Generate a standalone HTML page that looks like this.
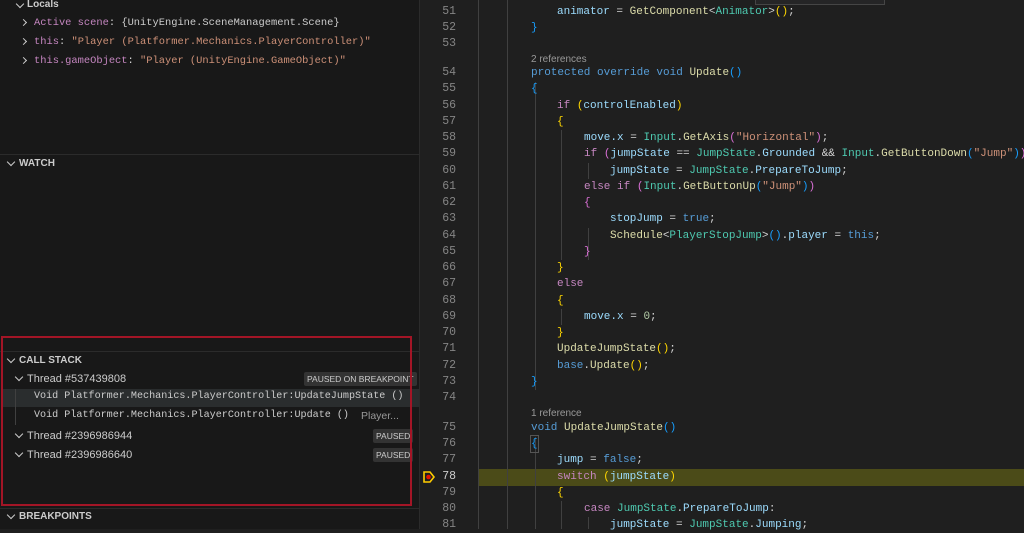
<!DOCTYPE html>
<html><head><meta charset="utf-8"><style>
*{margin:0;padding:0;box-sizing:border-box}
body{width:1024px;height:529px;background:#1f1f1f;overflow:hidden;position:relative;font-family:"Liberation Mono",monospace;font-size:11px;color:#ccc}
.lp{position:absolute;left:0;top:0;width:420px;height:529px;background:#181818;border-right:1px solid #2b2b2b}
.t{position:absolute;white-space:pre;line-height:16px}
.s{font-family:"Liberation Sans",sans-serif}
.h{font-family:"Liberation Sans",sans-serif;font-weight:bold;font-size:10px;color:#ccc}
.sep{position:absolute;left:0;width:419px;height:1px;background:#2b2b2b}
.badge{position:absolute;background:#333;color:#ccc;font-family:"Liberation Sans",sans-serif;font-size:8.5px;line-height:14px;padding:0 3px;border-radius:2px;white-space:nowrap}
.ln{position:absolute;left:420px;width:36px;text-align:right;color:#858585;white-space:pre;line-height:16px;font-size:11.5px}
.c{position:absolute;white-space:pre;line-height:16px;color:#9cdcfe}
.k{color:#569cd6}.p{color:#c586c0}.ty{color:#4ec9b0}.f{color:#dcdcaa}.st{color:#ce9178}.w{color:#d4d4d4}
.y{color:#ffd700}.m{color:#da70d6}.b{color:#179fff}.n{color:#b5cea8}
.g{position:absolute;width:1px;background:#404040}
.ref{position:absolute;font-family:"Liberation Sans",sans-serif;font-size:10px;color:#999;line-height:13px}
.chev{position:absolute;width:6px;height:6px;border-right:1.2px solid #ccc;border-bottom:1.2px solid #ccc;transform:rotate(45deg)}
.chr{position:absolute;width:5px;height:5px;border-right:1.2px solid #ccc;border-bottom:1.2px solid #ccc;transform:rotate(-45deg)}
</style></head><body>
<div class="lp">
<div class="chev" style="left:17px;top:1px"></div>
<div class="t h" style="left:27px;top:-3px">Locals</div>
<div class="chr" style="left:21px;top:20px"></div>
<div class="t" style="left:34px;top:15px;font-size:10.4px"><span style="color:#c586c0">Active scene</span><span class="w">:</span> <span style="color:#ccc">{UnityEngine.SceneManagement.Scene}</span></div>
<div class="chr" style="left:21px;top:39px"></div>
<div class="t" style="left:34px;top:34px;font-size:10.4px"><span style="color:#c586c0">this</span><span class="w">:</span> <span class="st">"Player (Platformer.Mechanics.PlayerController)"</span></div>
<div class="chr" style="left:21px;top:58px"></div>
<div class="t" style="left:34px;top:53px;font-size:10.4px"><span style="color:#c586c0">this.gameObject</span><span class="w">:</span> <span class="st">"Player (UnityEngine.GameObject)"</span></div>
<div class="sep" style="top:154px"></div>
<div class="chev" style="left:8px;top:159px"></div>
<div class="t h" style="left:19px;top:156px">WATCH</div>
<div class="sep" style="top:351px"></div>
<div class="chev" style="left:8px;top:356px"></div>
<div class="t h" style="left:19px;top:353px">CALL STACK</div>
<div class="chev" style="left:16px;top:374px"></div>
<div class="t s" style="left:27px;top:371px;font-size:11px">Thread #537439808</div>
<div class="badge" style="left:304px;top:372px">PAUSED ON BREAKPOINT</div>
<div style="position:absolute;left:3px;top:389px;width:416px;height:18px;background:#2a2d2e"></div>
<div class="g" style="left:15px;top:389px;height:36px"></div>
<div class="t" style="left:34px;top:389px;color:#ccc;font-size:10.1px">Void Platformer.Mechanics.PlayerController:UpdateJumpState ()</div>
<div class="t" style="left:34px;top:408px;color:#ccc;font-size:10.1px">Void Platformer.Mechanics.PlayerController:Update ()</div>
<div class="t s" style="left:361px;top:408px;color:#999;font-size:10.5px">Player...</div>
<div class="chev" style="left:16px;top:431px"></div>
<div class="t s" style="left:27px;top:428px;font-size:11px">Thread #2396986944</div>
<div class="badge" style="left:373px;top:429px">PAUSED</div>
<div class="chev" style="left:16px;top:450px"></div>
<div class="t s" style="left:27px;top:447px;font-size:11px">Thread #2396986640</div>
<div class="badge" style="left:373px;top:448px">PAUSED</div>
<div style="position:absolute;left:1px;top:336px;width:411px;height:170px;border:2px solid #a31526"></div>
<div class="sep" style="top:508px"></div>
<div class="chev" style="left:8px;top:512px"></div>
<div class="t h" style="left:19px;top:509px">BREAKPOINTS</div>
</div>
<div style="position:absolute;left:755px;top:0;width:130px;height:5px;background:#252526;border:1px solid #454545;border-top:none"></div>
<div style="position:absolute;left:478px;top:469px;width:546px;height:17px;background:#4b4b18"></div>
<div class="g" style="left:478px;top:0;height:529px"></div>
<div class="g" style="left:507px;top:0;height:529px"></div>
<div class="g" style="left:535px;top:82px;height:308px"></div>
<div class="g" style="left:535px;top:437px;height:92px"></div>
<div class="g" style="left:561px;top:130px;height:130px"></div>
<div class="g" style="left:561px;top:309px;height:16px"></div>
<div class="g" style="left:561px;top:501px;height:28px"></div>
<div class="g" style="left:588px;top:228px;height:32px"></div>
<div class="g" style="left:588px;top:163px;height:16px"></div>
<div class="g" style="left:588px;top:517px;height:12px"></div>
<svg style="position:absolute;left:422px;top:470px" width="14" height="14" viewBox="0 0 14 14"><path d="M2 2H8L12 7L8 12H2Z" fill="none" stroke="#ffcc00" stroke-width="1.6"/><circle cx="6.5" cy="7" r="2.3" fill="#e51400"/></svg>
<div class="ln" style="top:4px">51</div><div class="c" style="left:557px;top:4px">animator <span class="w">=</span> <span class="f">GetComponent</span><span class="w">&lt;</span><span class="ty">Animator</span><span class="w">&gt;</span><span class="y">()</span><span class="w">;</span></div>
<div class="ln" style="top:20px">52</div><div class="c b" style="left:531px;top:20px">}</div>
<div class="ln" style="top:36px">53</div>
<div class="ref" style="left:531px;top:53px">2 references</div>
<div class="ln" style="top:65px">54</div><div class="c" style="left:531px;top:65px"><span class="k">protected override void</span> <span class="f">Update</span><span class="b">()</span></div>
<div class="ln" style="top:81px">55</div><div class="c b" style="left:531px;top:81px">{</div>
<div class="ln" style="top:98px">56</div><div class="c" style="left:557px;top:98px"><span class="p">if</span> <span class="y">(</span>controlEnabled<span class="y">)</span></div>
<div class="ln" style="top:114px">57</div><div class="c y" style="left:557px;top:114px">{</div>
<div class="ln" style="top:130px">58</div><div class="c" style="left:584px;top:130px">move.x <span class="w">=</span> <span class="ty">Input</span><span class="w">.</span><span class="f">GetAxis</span><span class="m">(</span><span class="st">"Horizontal"</span><span class="m">)</span><span class="w">;</span></div>
<div class="ln" style="top:146px">59</div><div class="c" style="left:584px;top:146px"><span class="p">if</span> <span class="m">(</span>jumpState <span class="w">==</span> <span class="ty">JumpState</span><span class="w">.</span>Grounded <span class="w">&amp;&amp;</span> <span class="ty">Input</span><span class="w">.</span><span class="f">GetButtonDown</span><span class="b">(</span><span class="st">"Jump"</span><span class="b">)</span><span class="m">)</span></div>
<div class="ln" style="top:163px">60</div><div class="c" style="left:610px;top:163px">jumpState <span class="w">=</span> <span class="ty">JumpState</span><span class="w">.</span>PrepareToJump<span class="w">;</span></div>
<div class="ln" style="top:179px">61</div><div class="c" style="left:584px;top:179px"><span class="p">else if</span> <span class="m">(</span><span class="ty">Input</span><span class="w">.</span><span class="f">GetButtonUp</span><span class="b">(</span><span class="st">"Jump"</span><span class="b">)</span><span class="m">)</span></div>
<div class="ln" style="top:195px">62</div><div class="c m" style="left:584px;top:195px">{</div>
<div class="ln" style="top:211px">63</div><div class="c" style="left:610px;top:211px">stopJump <span class="w">=</span> <span class="k">true</span><span class="w">;</span></div>
<div class="ln" style="top:228px">64</div><div class="c" style="left:610px;top:228px"><span class="f">Schedule</span><span class="w">&lt;</span><span class="ty">PlayerStopJump</span><span class="w">&gt;</span><span class="b">()</span><span class="w">.</span>player <span class="w">=</span> <span class="k">this</span><span class="w">;</span></div>
<div class="ln" style="top:244px">65</div><div class="c m" style="left:584px;top:244px">}</div>
<div class="ln" style="top:260px">66</div><div class="c y" style="left:557px;top:260px">}</div>
<div class="ln" style="top:276px">67</div><div class="c p" style="left:557px;top:276px">else</div>
<div class="ln" style="top:293px">68</div><div class="c y" style="left:557px;top:293px">{</div>
<div class="ln" style="top:309px">69</div><div class="c" style="left:584px;top:309px">move.x <span class="w">=</span> <span class="n">0</span><span class="w">;</span></div>
<div class="ln" style="top:325px">70</div><div class="c y" style="left:557px;top:325px">}</div>
<div class="ln" style="top:341px">71</div><div class="c" style="left:557px;top:341px"><span class="f">UpdateJumpState</span><span class="y">()</span><span class="w">;</span></div>
<div class="ln" style="top:358px">72</div><div class="c" style="left:557px;top:358px"><span class="k">base</span><span class="w">.</span><span class="f">Update</span><span class="y">()</span><span class="w">;</span></div>
<div class="ln" style="top:374px">73</div><div class="c b" style="left:531px;top:374px">}</div>
<div class="ln" style="top:390px">74</div>
<div class="ref" style="left:531px;top:407px">1 reference</div>
<div class="ln" style="top:420px">75</div><div class="c" style="left:531px;top:420px"><span class="k">void</span> <span class="f">UpdateJumpState</span><span class="b">()</span></div>
<div class="ln" style="top:436px">76</div><div class="c b" style="left:531px;top:436px;outline:1px solid #555">{</div>
<div class="ln" style="top:452px">77</div><div class="c" style="left:557px;top:452px">jump <span class="w">=</span> <span class="k">false</span><span class="w">;</span></div>
<div class="ln" style="top:469px;color:#ccc">78</div><div class="c" style="left:557px;top:469px"><span class="p">switch</span> <span class="y">(</span>jumpState<span class="y">)</span></div>
<div class="ln" style="top:485px">79</div><div class="c y" style="left:557px;top:485px">{</div>
<div class="ln" style="top:501px">80</div><div class="c" style="left:584px;top:501px"><span class="p">case</span> <span class="ty">JumpState</span><span class="w">.</span>PrepareToJump<span class="w">:</span></div>
<div class="ln" style="top:517px">81</div><div class="c" style="left:610px;top:517px">jumpState <span class="w">=</span> <span class="ty">JumpState</span><span class="w">.</span>Jumping<span class="w">;</span></div>
</body></html>
